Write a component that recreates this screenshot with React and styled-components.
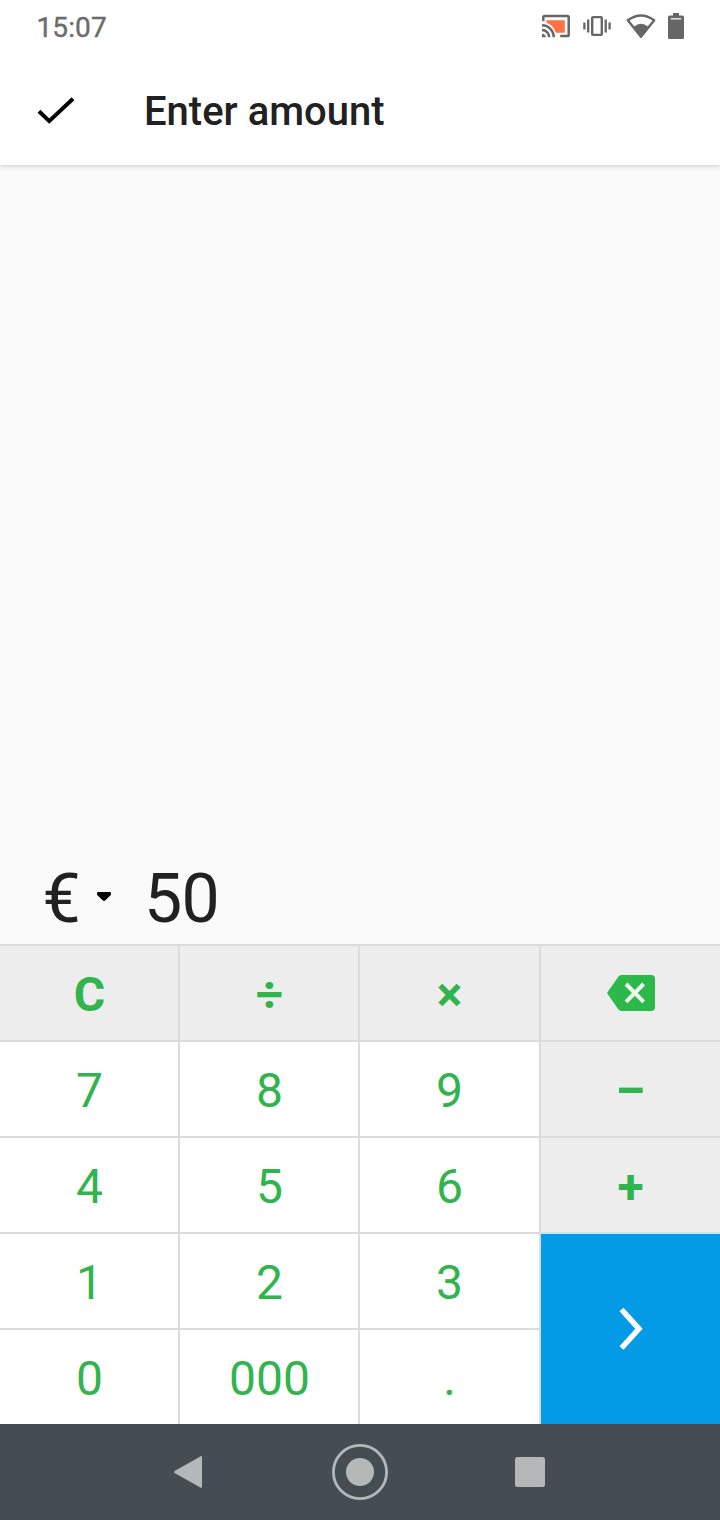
import React from 'react';
import styled, { createGlobalStyle } from 'styled-components';

const GlobalStyle = createGlobalStyle`
  * { box-sizing: border-box; }
  body { margin: 0; background: #fafafa; font-family: Roboto, sans-serif; }
  svg { display: block; flex: none; }
`;

const Screen = styled.div`
  display: flex;
  flex-direction: column;
  width: 720px;
  height: 1520px;
  overflow: hidden;
  color: #212121;
`;

const Header = styled.header`
  flex: none;
  height: 165px;
  background: #fff;
  box-shadow: 0 1px 3px rgba(0, 0, 0, 0.13), 0 3px 8px rgba(0, 0, 0, 0.05);
`;

const StatusBar = styled.div`
  display: flex;
  justify-content: space-between;
  height: 56px;
  padding: 0 34px 0 36.5px;
`;

const Clock = styled.time`
  padding-top: 1px;
  font-size: 28px;
  line-height: 54px;
  font-weight: 400;
  -webkit-text-stroke: 0.4px #6c6c6c;
  letter-spacing: 0.1px;
  color: #6c6c6c;
`;

const TitleBar = styled.div`
  display: flex;
  align-items: center;
  height: 109px;
  padding-left: 32px;
`;

const Title = styled.h1`
  margin: 2px 0 0 64px;
  font-size: 40px;
  line-height: 48px;
  font-weight: 500;
`;

const AmountArea = styled.main`
  flex: 1;
  display: flex;
  align-items: flex-end;
`;

const AmountRow = styled.div`
  display: flex;
  align-items: center;
  height: 90px;
  padding-left: 42.5px;
  font-size: 68px;
  line-height: 80px;
`;

const Currency = styled.button`
  display: flex;
  align-items: center;
  width: 101.5px;
  padding: 0;
  border: 0;
  background: none;
  font: inherit;
  color: inherit;
  gap: 15.5px;

  svg { margin-bottom: 6px; }
`;

const Digits = styled.span`
  letter-spacing: -0.6px;
`;

const Keypad = styled.section`
  flex: none;
  display: grid;
  grid-template-columns: 180px 180px 181px 179px;
  grid-auto-rows: 96px;
`;

const Key = styled.button`
  display: flex;
  align-items: center;
  justify-content: center;
  margin: 0;
  padding: ${(p) => (p.$icon ? 0 : 4)}px 0 0 ${(p) => (p.$nudge ? 1 : 0)}px;
  border: solid #dbdbdb;
  border-width: 2px ${(p) => (p.$last ? 0 : 2)}px 0 0;
  background: ${(p) => (p.$operator ? '#ededed' : '#fff')};
  color: #31b44e;
  font-family: Roboto, sans-serif;
  font-size: 48px;
  line-height: 56px;
  font-weight: ${(p) => (p.$operator ? 700 : 400)};
`;

const NextKey = styled(Key)`
  grid-row: 4 / span 2;
  grid-column: 4;
  padding-left: 3px;
  border-color: #c5e6f5;
  background: #039be6;
`;

const Minus = styled.span`
  transform: scaleX(1.17);
`;

const NavBar = styled.nav`
  flex: none;
  display: flex;
  height: 96px;
  background: #454d52;
`;

const NavSvg = styled.svg`
  fill: #b4b8b8;
`;

const StatusIcons = () => (
  <svg width="150" height="56" viewBox="536 0 150 56">
    <g fill="none" stroke="#666" strokeWidth="2.5">
      <path d="M543.3 21v-3.6q0-1.4 1.4-1.4h22.7q1.3 0 1.3 1.4v17.3q0 1.4-1.3 1.4h-7.2" />
      <path d="M542 25.3a11.7 11.7 0 0 1 11.7 11.9M542 30a7.2 7.2 0 0 1 7.2 7.2" />
    </g>
    <path d="M546.5 20.2h18.3v12.6h-9q-2.5-8-9.3-10z" fill="#ff7043" />
    <path d="M542 33.7a3.6 3.6 0 0 1 3.7 3.6H542z" fill="#666" />
    <g fill="none" stroke="#666">
      <rect x="592.2" y="17.1" width="9.6" height="17.8" rx="1" strokeWidth="2.4" />
      <path d="M588.2 19.5v13M605.7 19.5v13M584.4 22.5v7M609.6 22.5v7" strokeWidth="2.3" />
    </g>
    <path d="M627.8 20.3q13.2-9.8 26.4 0L641 36.7z" fill="none" stroke="#666" strokeWidth="2.4" strokeLinejoin="round" />
    <path d="M633.8 26.8q7.2-6 14.4 0L641 37z" fill="#666" />
    <path d="M673 13h6v2.5h3.4q1.6 0 1.6 1.6v20.3q0 1.6-1.6 1.6h-12.8q-1.6 0-1.6-1.6V17.1q0-1.6 1.6-1.6h3.4z" fill="#666" />
    <path d="M670.7 18.8h10.6" stroke="#d9d9d9" strokeWidth="1.7" />
  </svg>
);

const CheckIcon = () => (
  <svg width="48" height="48" viewBox="32 86 48 48" fill="none" stroke="#000" strokeWidth="4">
    <path d="M39 110.3l10.2 9.8L73 97.8" />
  </svg>
);

const BackspaceIcon = () => (
  <svg width="48" height="36" viewBox="0 0 48 36">
    <path d="M14.5 0H44q4 0 4 4v28q0 4-4 4H14.5q-2 0-3.2-1.8L0 18 11.3 1.8Q12.5 0 14.5 0z" fill="#2db84c" />
    <path d="M19 9l17.6 17.8M36.6 9L19 26.8" stroke="#effbed" strokeWidth="4" />
  </svg>
);

const keys = [
  ['C', true], ['÷', true], ['×', true], ['back', true],
  ['7'], ['8'], ['9'], ['−', true],
  ['4'], ['5'], ['6'], ['+', true],
  ['1'], ['2'], ['3'],
  ['0'], ['000'], ['.'],
];

const renderLabel = (label) => {
  if (label === 'back') return <BackspaceIcon />;
  if (label === '−') return <Minus>−</Minus>;
  return label;
};

export default function App() {
  return (
    <Screen>
      <GlobalStyle />
      <Header>
        <StatusBar>
          <Clock>15:07</Clock>
          <StatusIcons />
        </StatusBar>
        <TitleBar>
          <CheckIcon />
          <Title>Enter amount</Title>
        </TitleBar>
      </Header>
      <AmountArea>
        <AmountRow>
          <Currency>
            €
            <svg width="16" height="12" viewBox="0 0 16 12">
              <path d="M2.2 2h11.6q1.2 0 1.2 1.2v1.1q0 .7-.7 1.3L9.4 10.2Q8 11.6 6.6 10.2L1.7 5.6Q1 5 1 4.3V3.2Q1 2 2.2 2z" />
            </svg>
          </Currency>
          <Digits>50</Digits>
        </AmountRow>
      </AmountArea>
      <Keypad>
        {keys.map(([label, operator], i) => (
          <Key
            key={label}
            $operator={operator}
            $icon={label === 'back'}
            $nudge={i < 15 ? i % 4 < 2 : i < 17}
            $last={operator && i % 4 === 3}
          >
            {renderLabel(label)}
          </Key>
        ))}
        <NextKey $last $icon>
          <svg width="28" height="44" viewBox="0 0 28 44">
            <path d="M3.5 2.5L21 21.8 3.5 41" fill="none" stroke="#fff" strokeWidth="5.5" />
          </svg>
        </NextKey>
      </Keypad>
      <NavBar>
        <NavSvg width="720" height="96" viewBox="0 0 720 96">
          <path d="M175 46.7L200.3 32.4q1.7-1 1.7 1v29.2q0 2-1.7 1L175 49.3q-2-1.3 0-2.6z" />
          <circle cx="360" cy="48" r="26.6" fill="none" stroke="#b4b8b8" strokeWidth="2.8" />
          <circle cx="360" cy="48" r="14" />
          <rect x="515" y="33" width="30" height="30" rx="2.5" />
        </NavSvg>
      </NavBar>
    </Screen>
  );
}
